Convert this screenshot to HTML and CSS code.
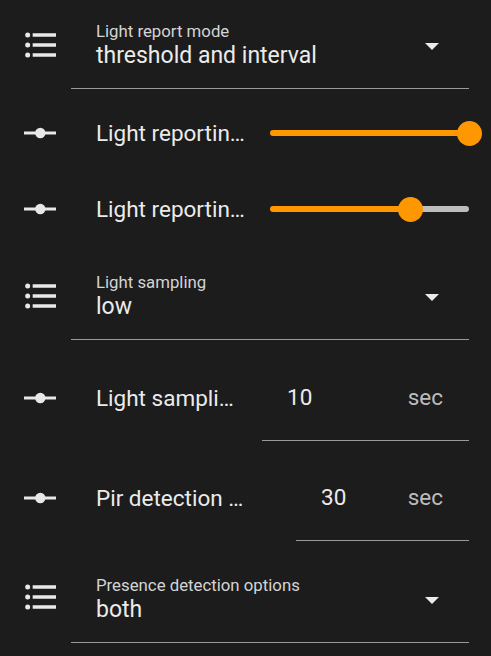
FILE: index.html
```html
<!DOCTYPE html>
<html lang="en">
<head>
<meta charset="utf-8">
<title>Entities</title>
<link rel="stylesheet" href="styles.css">
</head>
<body>
<div class="card">
  <div class="row select-row row-a">
    <svg class="icon list-icon" viewBox="0 0 24 24"><path d="M7,5H21V7H7V5M7,13V11H21V13H7M4,4.5A1.5,1.5 0 0,1 5.5,6A1.5,1.5 0 0,1 4,7.5A1.5,1.5 0 0,1 2.5,6A1.5,1.5 0 0,1 4,4.5M4,10.5A1.5,1.5 0 0,1 5.5,12A1.5,1.5 0 0,1 4,13.5A1.5,1.5 0 0,1 2.5,12A1.5,1.5 0 0,1 4,10.5M7,19V17H21V19H7M4,16.5A1.5,1.5 0 0,1 5.5,18A1.5,1.5 0 0,1 4,19.5A1.5,1.5 0 0,1 2.5,18A1.5,1.5 0 0,1 4,16.5Z"/></svg>
    <div class="select-field">
      <div class="select-text">
        <div class="select-label">Light report mode</div>
        <div class="select-value">threshold and interval</div>
      </div>
      <span class="arrow"></span>
    </div>
  </div>

  <div class="row slider-row row-b">
    <svg class="icon" viewBox="0 0 40 40"><rect x="3" y="18.5" width="32" height="3"/><circle cx="19.3" cy="20" r="5.2"/></svg>
    <div class="name name-slider">Light reportin…</div>
    <div class="slider">
      <div class="fill" style="width:100%"></div>
      <div class="thumb"></div>
      <div class="rest"></div>
    </div>
  </div>

  <div class="row slider-row">
    <svg class="icon" viewBox="0 0 40 40"><rect x="3" y="18.5" width="32" height="3"/><circle cx="19.3" cy="20" r="5.2"/></svg>
    <div class="name name-slider">Light reportin…</div>
    <div class="slider">
      <div class="fill" style="width:70.4%"></div>
      <div class="thumb"></div>
      <div class="rest"></div>
    </div>
  </div>

  <div class="row select-row row-d">
    <svg class="icon list-icon" viewBox="0 0 24 24"><path d="M7,5H21V7H7V5M7,13V11H21V13H7M4,4.5A1.5,1.5 0 0,1 5.5,6A1.5,1.5 0 0,1 4,7.5A1.5,1.5 0 0,1 2.5,6A1.5,1.5 0 0,1 4,4.5M4,10.5A1.5,1.5 0 0,1 5.5,12A1.5,1.5 0 0,1 4,13.5A1.5,1.5 0 0,1 2.5,12A1.5,1.5 0 0,1 4,10.5M7,19V17H21V19H7M4,16.5A1.5,1.5 0 0,1 5.5,18A1.5,1.5 0 0,1 4,19.5A1.5,1.5 0 0,1 2.5,18A1.5,1.5 0 0,1 4,16.5Z"/></svg>
    <div class="select-field">
      <div class="select-text">
        <div class="select-label">Light sampling</div>
        <div class="select-value">low</div>
      </div>
      <span class="arrow"></span>
    </div>
  </div>

  <div class="row num-row row-e">
    <svg class="icon" viewBox="0 0 40 40"><rect x="3" y="18.5" width="32" height="3"/><circle cx="19.3" cy="20" r="5.2"/></svg>
    <div class="name name-e">Light sampli…</div>
    <div class="num-field">
      <span class="num-value">10</span>
      <span class="suffix">sec</span>
    </div>
  </div>

  <div class="row num-row row-f">
    <svg class="icon" viewBox="0 0 40 40"><rect x="3" y="18.5" width="32" height="3"/><circle cx="19.3" cy="20" r="5.2"/></svg>
    <div class="name name-f">Pir detection …</div>
    <div class="num-field">
      <span class="num-value">30</span>
      <span class="suffix">sec</span>
    </div>
  </div>

  <div class="row select-row row-g">
    <svg class="icon list-icon" viewBox="0 0 24 24"><path d="M7,5H21V7H7V5M7,13V11H21V13H7M4,4.5A1.5,1.5 0 0,1 5.5,6A1.5,1.5 0 0,1 4,7.5A1.5,1.5 0 0,1 2.5,6A1.5,1.5 0 0,1 4,4.5M4,10.5A1.5,1.5 0 0,1 5.5,12A1.5,1.5 0 0,1 4,13.5A1.5,1.5 0 0,1 2.5,12A1.5,1.5 0 0,1 4,10.5M7,19V17H21V19H7M4,16.5A1.5,1.5 0 0,1 5.5,18A1.5,1.5 0 0,1 4,19.5A1.5,1.5 0 0,1 2.5,18A1.5,1.5 0 0,1 4,16.5Z"/></svg>
    <div class="select-field">
      <div class="select-text">
        <div class="select-label">Presence detection options</div>
        <div class="select-value">both</div>
      </div>
      <span class="arrow"></span>
    </div>
  </div>
</div>
</body>
</html>
```

FILE: styles.css
```css
html, body {
  margin: 0;
  padding: 0;
  background: #1c1c1c;
  height: 100%;
  overflow: hidden;
}

body {
  font-family: Roboto, "Noto Sans", "Liberation Sans", sans-serif;
  color: #e1e1e1;
}

.card {
  display: flex;
  flex-direction: column;
  padding: 18px 22px 0 21px;
}

.row {
  display: flex;
  align-items: center;
}

.icon {
  width: 40px;
  height: 40px;
  flex: none;
  fill: #e8e8e8;
}

/* select rows */
.select-row {
  align-items: flex-start;
  height: 71px;
}

.select-row .icon {
  margin-top: 7px;
}

.row-d { margin-top: 22px; }
.row-g { margin-top: 31px; }
.row-g .icon { margin-top: 5px; }

.select-field {
  flex: 1;
  display: flex;
  align-items: flex-start;
  height: 71px;
  box-sizing: border-box;
  margin-left: 10px;
  padding: 3px 30px 0 25px;
  border-bottom: 1px solid #9a9a9a;
}

.select-text {
  flex: 1;
  display: flex;
  flex-direction: column;
}

.select-label {
  font-size: 16.8px;
  line-height: 20px;
  color: #d4d4d4;
}

.select-value {
  font-size: 23px;
  line-height: 26px;
  margin-top: 2px;
  color: #ebebeb;
}

.arrow {
  width: 0;
  height: 0;
  margin-top: 22px;
  border-left: 7px solid transparent;
  border-right: 7px solid transparent;
  border-top: 7px solid #ebebeb;
}

/* entity names */
.name {
  flex: none;
  margin-left: 35px;
  font-size: 22.5px;
  line-height: 26px;
  white-space: nowrap;
  overflow: hidden;
  color: #ebebeb;
}

.name-slider { width: 174px; }
.name-e { width: 166px; }
.name-f { width: 200px; }

/* slider rows */
.slider-row {
  height: 76px;
}

.row-b { margin-top: 6px; }

.slider {
  flex: 1;
  display: flex;
  align-items: center;
  height: 25px;
}

.fill {
  height: 6px;
  background: #ff9800;
  border-radius: 3px 0 0 3px;
}

.thumb {
  flex: none;
  width: 25px;
  height: 25px;
  border-radius: 50%;
  background: #ff9800;
  margin: 0 -12.5px;
  position: relative;
  z-index: 1;
}

.rest {
  flex: 1;
  height: 6px;
  background: #bdbdbd;
  border-radius: 0 3px 3px 0;
}

/* number rows */
.num-row {
  height: 87px;
}

.row-e { margin-top: 14px; }
.row-f { margin-top: 13px; }

.num-field {
  flex: 1;
  display: flex;
  align-items: center;
  height: 87px;
  box-sizing: border-box;
  padding: 0 26px 0 25px;
  border-bottom: 1px solid #9a9a9a;
  font-size: 22.5px;
  line-height: 26px;
}

.num-value {
  color: #ebebeb;
}

.suffix {
  margin-left: auto;
  color: #bcbcbc;
}
```
